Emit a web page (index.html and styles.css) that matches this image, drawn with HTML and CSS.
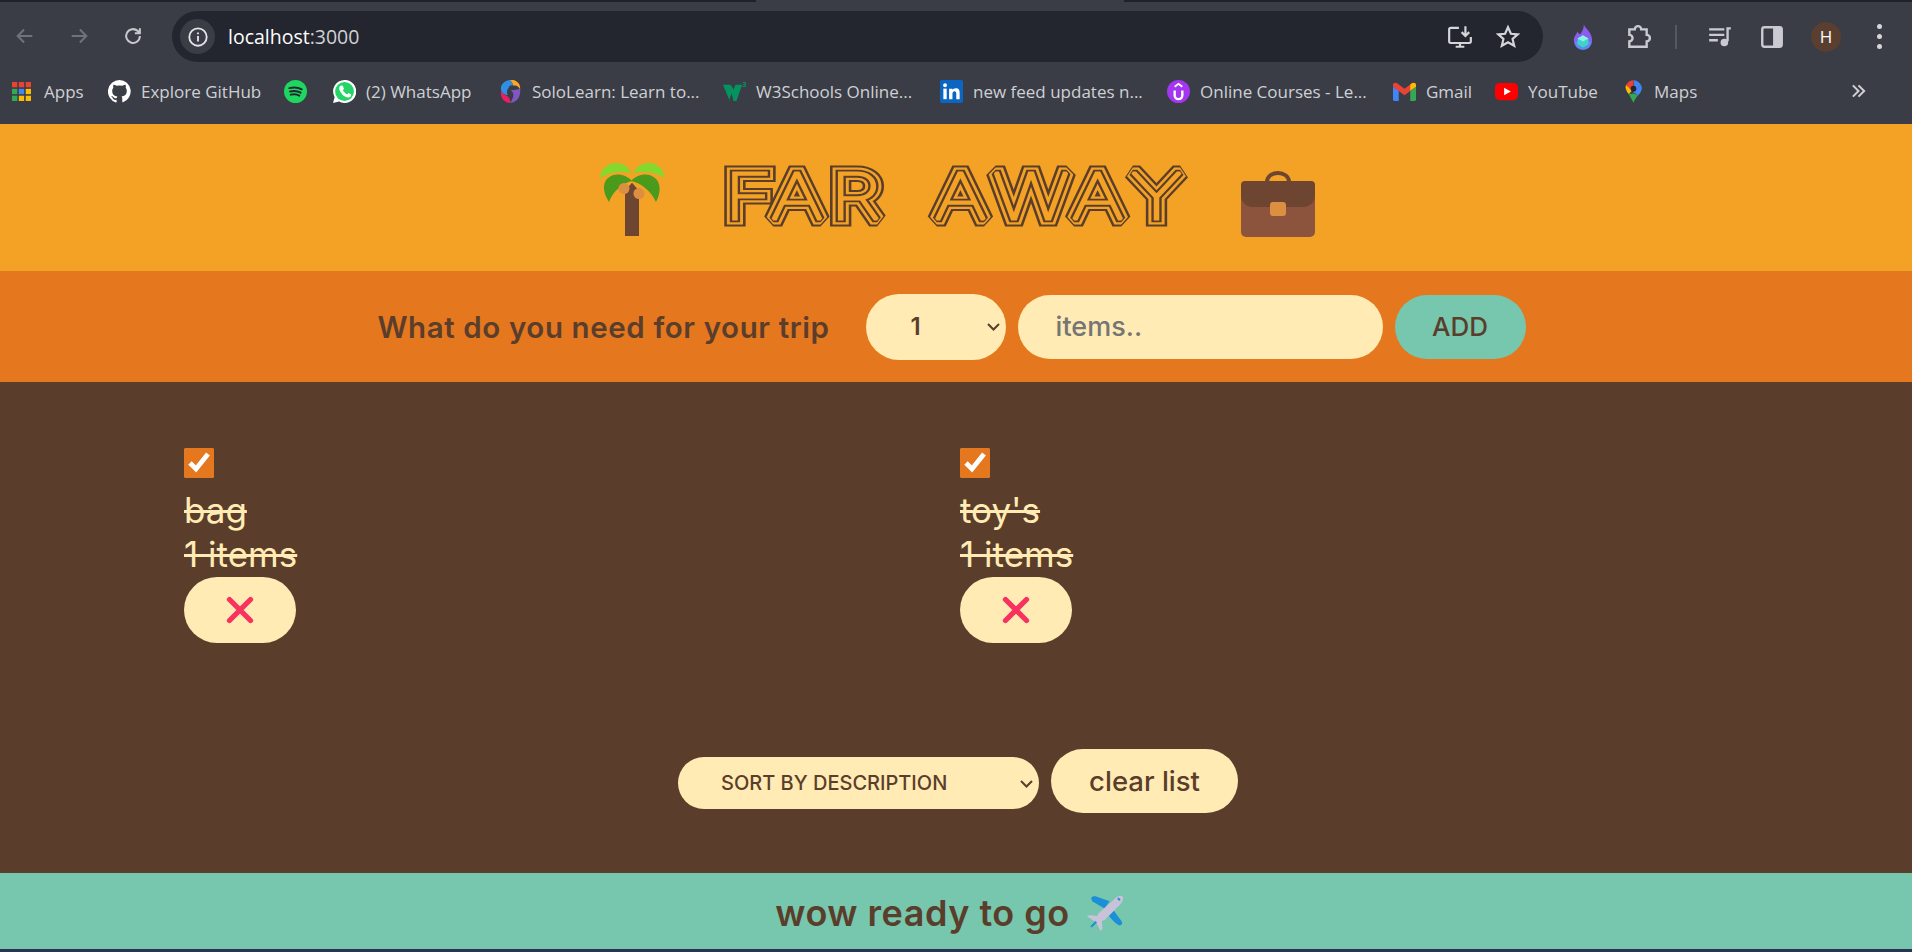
FILE: index.html
```html
<!DOCTYPE html>
<html lang="en">
<head>
<meta charset="utf-8">
<title>Far Away</title>
<link rel="stylesheet" href="styles.css">
</head>
<body>
<div class="chrome">
  <div class="tabstrip"><span class="tab-left"></span><span class="tab-right"></span></div>
  <div class="toolbar">
    <svg class="nav nav-dim" viewBox="0 0 24 24"><path d="M20 12H5M11 5l-7 7 7 7"/></svg>
    <svg class="nav nav-dim" viewBox="0 0 24 24"><path d="M4 12h15M13 5l7 7-7 7"/></svg>
    <svg class="nav" viewBox="0 0 24 24"><path d="M19.500 12a7.500 7.500 0 1 1-2.300-5.400L19.500 9M19.500 3.500V9H14"/></svg>
    <div class="omnibox">
      <span class="site-info"><svg viewBox="0 0 24 24"><circle cx="12" cy="12" r="9.500"/><path d="M12 11v6M12 7v2"/></svg></span>
      <span class="url">localhost<span class="url-port">:3000</span></span>
      <svg class="omni-icon" viewBox="0 0 24 24"><path d="M11 3.500H3.500A1.500 1.500 0 0 0 2 5v11a1.500 1.500 0 0 0 1.500 1.500h17A1.500 1.500 0 0 0 22 16v-4M8 21h8M12 18v3M17 2v9M13.500 7.500L17 11l3.500-3.500"/></svg>
      <svg class="omni-icon" viewBox="0 0 24 24"><path d="M12 3l2.700 6 6.300.6-4.800 4.200 1.500 6.300L12 16.800 6.300 20.100l1.500-6.300L3 9.600 9.300 9z"/></svg>
    </div>
    <div class="tools">
      <svg class="flame" viewBox="0 0 24 30"><path fill="#8a5cf0" d="M13 1c1 5 9 8 9 18a10 10 0 0 1-20 0c0-5 3-7 4-10 1 2 2 3 3 3 2-3 4-6 4-11z"/><path fill="#5a8df0" d="M3 20a9 9 0 0 0 18 0z"/><path fill="#3fd3c9" d="M12 13l6 3.500v6.500l-6 3.500-6-3.500v-6.500z"/><path fill="#8df0e6" d="M12 13l6 3.500-6 3.500-6-3.500z"/></svg>
      <svg class="tool puzzle" viewBox="0 0 24 24"><path d="M9 5a3 3 0 0 1 6 0h5v5a3 3 0 0 1 0 6v5H4v-5a3 3 0 0 0 0-6V5z"/></svg>
      <span class="sep"></span>
      <svg class="tool queue" viewBox="0 0 24 24"><path d="M2 5h14M2 10h14M2 15h8M19 16V4h3"/><circle class="solid" cx="16" cy="17" r="3.500"/></svg>
      <svg class="tool panel" viewBox="0 0 24 24"><rect x="3" y="3" width="18" height="18" rx="2"/><rect class="solid" x="13" y="3" width="8" height="18"/></svg>
      <span class="avatar">H</span>
      <span class="dots"><i></i><i></i><i></i></span>
    </div>
  </div>
  <div class="bookmarks">
    <a class="bm"><svg class="bm-icon apps" viewBox="0 0 18 18"><rect width="5" height="5" fill="#ea4335"/><rect x="6.500" width="5" height="5" fill="#ea4335"/><rect x="13" width="5" height="5" fill="#ea4335"/><rect y="6.500" width="5" height="5" fill="#34a853"/><rect x="6.500" y="6.500" width="5" height="5" fill="#4285f4"/><rect x="13" y="6.500" width="5" height="5" fill="#fbbc04"/><rect y="13" width="5" height="5" fill="#34a853"/><rect x="6.500" y="13" width="5" height="5" fill="#fbbc04"/><rect x="13" y="13" width="5" height="5" fill="#fbbc04"/></svg>Apps</a>
    <a class="bm"><svg class="bm-icon" viewBox="0 0 24 24"><path fill="#fff" d="M12 0a12 12 0 0 0-3.800 23.400c.6.100.8-.300.8-.600v-2.100c-3.300.7-4-1.600-4-1.600-.5-1.400-1.300-1.800-1.300-1.800-1.100-.7.100-.7.100-.7 1.200.1 1.800 1.200 1.800 1.200 1.100 1.800 2.800 1.300 3.500 1 .1-.8.400-1.300.8-1.600-2.700-.3-5.500-1.300-5.500-5.900 0-1.300.5-2.400 1.200-3.200-.1-.3-.5-1.500.1-3.200 0 0 1-.3 3.300 1.200a11.500 11.500 0 0 1 6 0c2.300-1.500 3.300-1.200 3.300-1.200.7 1.700.2 2.900.1 3.200.8.800 1.200 1.900 1.200 3.200 0 4.600-2.800 5.600-5.500 5.900.4.400.8 1.100.8 2.200v3.300c0 .3.200.7.800.6A12 12 0 0 0 12 0z"/></svg>Explore GitHub</a>
    <a class="bm"><svg class="bm-icon" viewBox="0 0 24 24"><circle cx="12" cy="12" r="12" fill="#1ed760"/><path d="M5.500 8.500c4-1 9-1 13 1.200M6.300 12c3.500-.8 8-.6 11 1.200M7 15.300c3-.7 6.500-.5 9 1" fill="none" stroke="#23262e" stroke-width="2" stroke-linecap="round"/></svg></a>
    <a class="bm"><svg class="bm-icon" viewBox="0 0 24 24"><path fill="#fff" d="M12 0a12 12 0 0 0-10.300 18L0 24l6.300-1.600A12 12 0 1 0 12 0z"/><circle cx="12" cy="12" r="9.800" fill="#25d366"/><path fill="#fff" d="M8.500 5.800c-.8 0-2 1-2 3 0 3 4.500 9.400 9.500 9.400 2 0 3-1.300 3-2.500l-.2-.8-2.800-1.400-1.200 1.500c-1.500-.4-4-2.800-4.600-4.500l1.300-1.200-1.200-3.200z"/></svg>(2) WhatsApp</a>
    <a class="bm"><svg class="bm-icon" viewBox="0 0 24 24"><path fill="#f9a825" d="M11 0c6-1 12 3 11 10-1-3-4-5-7-4-1-3-2-5-4-6z"/><path fill="#2f8fe0" d="M11 0C5 1 2 5 2 9c0 4 3 6 7 7-1-3-1-5 1-8 1-2 3-3 5-2-1-3-2-5-4-6z"/><path fill="#e91e63" d="M2 11c-1 7 3 13 10 13 0-3-1-5-3-7-3-1-6-3-7-6z"/><path fill="#7e57c2" d="M22 9c1 8-3 14-10 15 1-3 3-5 3-8 0-3-1-4-3-5 4-1 8-1 10-2z"/></svg>SoloLearn: Learn to...</a>
    <a class="bm"><svg class="bm-icon" viewBox="0 0 24 24"><path fill="#04925f" d="M0 5h8l3 5 2-5h7l-6 17h-3l-2-8-3 8H7z"/><text class="w3-sup" x="20" y="7">3</text></svg>W3Schools Online...</a>
    <a class="bm"><svg class="bm-icon" viewBox="0 0 24 24"><rect width="24" height="24" rx="2" fill="#0a66c2"/><rect x="3.500" y="9" width="3.500" height="11" fill="#fff"/><circle cx="5.250" cy="5.500" r="2" fill="#fff"/><path fill="#fff" d="M9.500 9H13v1.500c.6-1 1.800-1.800 3.500-1.800 3.200 0 4 2 4 5V20H17v-5.500c0-1.500-.4-2.700-1.800-2.700S13 12.900 13 14.400V20H9.500z"/></svg>new feed updates n...</a>
    <a class="bm"><svg class="bm-icon" viewBox="0 0 24 24"><circle cx="12" cy="12" r="12" fill="#a435f0"/><path d="M8 11v5a4 4 0 0 0 8 0v-5" fill="none" stroke="#fff" stroke-width="2.500"/><path d="M8 7l4-3 4 3" fill="none" stroke="#fff" stroke-width="2"/></svg>Online Courses - Le...</a>
    <a class="bm"><svg class="bm-icon" viewBox="0 0 24 20"><path fill="#4285f4" d="M0 5v13a2 2 0 0 0 2 2h4V9z"/><path fill="#34a853" d="M18 9v11h4a2 2 0 0 0 2-2V5z"/><path fill="#ea4335" d="M0 5l12 9 12-9V3c0-2-3-3-5-1l-7 5-7-5C3 0 0 1 0 3z"/><path fill="#fbbc04" d="M18 3v6l6-4V3c0-2-3-3-4.500-1.500z"/></svg>Gmail</a>
    <a class="bm"><svg class="bm-icon" viewBox="0 0 24 18"><rect width="24" height="18" rx="5" fill="#f00"/><path fill="#fff" d="M9.500 5l7 4-7 4z"/></svg>YouTube</a>
    <a class="bm"><svg class="bm-icon maps" viewBox="0 0 18 24"><path fill="#34a853" d="M4 15l5 9c1-3 3-6 5-8l-5-2z"/><path fill="#fbbc04" d="M1 5C0 8 1 11 4 15l6-7z"/><path fill="#4285f4" d="M9 0c3 0 6 2 8 5l-8 9 1-6z"/><path fill="#ea4335" d="M9 0C6 0 3 2 1 5l5 5 3-4z"/><path fill="#4285f4" d="M17 5c2 4 0 8-3 11l-5-3z"/><circle cx="9" cy="9" r="3" fill="#23262e"/></svg>Maps</a>
    <svg class="more" viewBox="0 0 16 14"><path d="M2 1l6 6-6 6M8 1l6 6-6 6"/></svg>
  </div>
</div>

<main class="app">
  <header class="hero">
    <svg class="emoji palm" viewBox="0 0 66 74"><path fill="#6d4530" d="M26 73V28l7-8 7 8v45z"/><path fill="#84d82e" d="M1 15.500C1 6 9 0 17 0c7 0 13 4 15.500 10.500C22 7 10 9 1 15.500z"/><path fill="#84d82e" d="M34 10.500C37 4 43 0 50 0c8 0 15 6 15.500 15C56 9 44 7 34 10.500z"/><path fill="#4a9a1c" d="M10 39C4 30 3 20 9 15c7-6 18-4 24 3-9 2-19 10-23 21z"/><path fill="#4a9a1c" d="M57 39c5-9 5-19-1-24-7-6-18-4-24 3 10 2 20 10 25 21z"/><path fill="#6d4530" d="M26 28l7-8 7 8v10H26z"/><circle fill="#dc8f41" cx="25" cy="25.500" r="5.500"/><circle fill="#dc8f41" cx="40" cy="30.500" r="5.500"/></svg>
    <h1 class="logo">
      <svg class="logo-svg" viewBox="0 0 462 61">
        <g class="logo-layers">
          <g class="layer-1"><text id="logo-text" class="logo-text" x="0.500 36 82 125 161.700 206.900 267.400 312.500" y="53.500">FAR AWAY</text></g>
          <use class="layer-2" href="#logo-text"/>
          <use class="layer-3" href="#logo-text"/>
          <use class="layer-4" href="#logo-text"/>
        </g>
      </svg>
    </h1>
    <svg class="emoji bag" viewBox="0 0 74 67"><path fill="none" stroke="#6d4530" stroke-width="4" d="M26 14v-2c0-12 22-12 22 0v2"/><path fill="#8c533d" d="M0 15h74v47a5 5 0 0 1-5 5H5a5 5 0 0 1-5-5z"/><path fill="#6d4530" d="M4 11h66a4 4 0 0 1 4 4v10c0 8-6 12-12 12H12C6 37 0 33 0 25V15a4 4 0 0 1 4-4z"/><rect fill="#dc8f41" x="29" y="32" width="16" height="14" rx="3"/></svg>
  </header>

  <form class="add-form">
    <h3 class="add-title">What do you need for your trip</h3>
    <select class="qty"><option>1</option></select>
    <input class="item-input" type="text" placeholder="items..">
    <button class="add-btn" type="button">ADD</button>
  </form>

  <section class="list">
    <ul class="items">
      <li class="item">
        <input class="check" type="checkbox" checked>
        <span class="packed">bag</span>
        <span class="packed">1 items</span>
        <button class="remove" type="button"><svg viewBox="0 0 24 24"><path d="M3 3l18 18M21 3L3 21"/></svg></button>
      </li>
      <li class="item">
        <input class="check" type="checkbox" checked>
        <span class="packed">toy's</span>
        <span class="packed">1 items</span>
        <button class="remove" type="button"><svg viewBox="0 0 24 24"><path d="M3 3l18 18M21 3L3 21"/></svg></button>
      </li>
    </ul>
    <div class="actions">
      <select class="sort"><option>SORT BY DESCRIPTION</option></select>
      <button class="clear" type="button">clear list</button>
    </div>
  </section>

  <footer class="stats">
    <span>wow ready to go</span>
    <svg class="plane" viewBox="0 0 36 36"><path fill="#1c8fd8" d="M4 4c1-2 3-2 5-1.500L22 7l-5 7L5 7zM26 16l8 11c1 2-1 4-3 3.500-3-1.500-6-4.500-10-9.500z"/><path fill="#c9c2da" d="M27 4.500C30 2 33 1 34.500 2.500 36 4 35 7 32.500 10L17 25.500l-2.500.5.5 8-2 2-3.500-7.500-2-2L0 22l2-1.500 8 1 1-2.500z"/><path d="M4 32l5-5M30 4l2 2" stroke="#1c8fd8" stroke-width="2" fill="none"/></svg>
  </footer>
</main>
<div class="taskbar-edge"></div>
</body>
</html>
```

FILE: styles.css
```css
* { box-sizing: border-box; }
html, body { margin: 0; padding: 0; height: 952px; overflow: hidden; }
body { font-family: "Inter", "Lato", sans-serif; background: #3a3d46; color: #5a3e2b; }

.chrome { height: 124px; background: #3a3d46; display: flex; flex-direction: column; }
.tabstrip { height: 2px; background: #3a3d46; display: flex; justify-content: space-between; }
.tab-left { width: 756px; background: #20222a; }
.tab-right { width: 788px; background: #20222a; }
.toolbar { height: 60px; padding: 9px 0 0 14px; display: flex; align-items: flex-start; }
.nav { width: 22px; height: 22px; margin: 14px 32px 0 0; fill: none; stroke: #c7c8cc; stroke-width: 2.200; }
.nav-dim { stroke: #6f727a; }
.omnibox { margin-left: -4px; width: 1371px; height: 51px; background: #23262e; border-radius: 26px; display: flex; align-items: center; padding: 0 22px 0 8px; color: #fff; }
.site-info { width: 35px; height: 35px; border-radius: 50%; background: #3a3d46; display: flex; align-items: center; justify-content: center; }
.site-info svg { width: 22px; height: 22px; fill: none; stroke: #e4e5e7; stroke-width: 2; }
.url { margin-left: 13px; font: 19.500px "Open Sans", sans-serif; flex: 1; }
.url-port { color: #d0d1d4; }
.omni-icon { width: 26px; height: 26px; margin-left: 22px; fill: none; stroke: #d5d6d9; stroke-width: 2; }
.tools { display: flex; align-items: center; height: 51px; }
.flame { width: 22px; height: 28px; margin-left: 29px; }
.tool { width: 26px; height: 26px; fill: none; stroke: #c9cbd1; stroke-width: 2.200; }
.puzzle { margin-left: 31px; }
.sep { width: 2px; height: 24px; background: #555862; margin: 0 30px 0 24px; }
.queue { margin-right: 26px; }
.panel { margin-right: 26px; }
.tool .solid { fill: #c9cbd1; stroke: none; }
.avatar { width: 30px; height: 30px; border-radius: 50%; background: #5a3e2f; color: #fff; font: 17px "Open Sans", sans-serif; display: flex; align-items: center; justify-content: center; }
.dots { display: flex; flex-direction: column; gap: 5px; margin-left: 36px; }
.dots i { width: 5px; height: 5px; border-radius: 50%; background: #d5d6d9; }

.bookmarks { flex: 1; display: grid; grid-template-columns: 96px 176px 49px 166px 224px 217px 227px 226px 102px 130px 226px 15px; align-items: center; padding: 0 0 4px 12px; font: 17px "Open Sans", sans-serif; color: #cfd0d4; }
.bm { display: flex; align-items: center; gap: 10px; white-space: nowrap; }
.bm-icon { width: 23px; height: 23px; flex: none; }
.apps { width: 19px; height: 19px; margin-right: 3px; }
.maps { width: 17px; margin-right: 2px; }
.w3-sup { font: 700 8px "Open Sans", sans-serif; fill: #04925f; }
.more { width: 15px; height: 14px; fill: none; stroke: #cfd0d4; stroke-width: 2.200; }

.app { height: 825px; display: flex; flex-direction: column; }
.hero { height: 147px; background: #f4a226; display: flex; align-items: flex-end; justify-content: center; padding: 0 0 34px 2px; }
.emoji { flex: none; }
.palm { width: 66px; height: 74px; }
.bag { width: 74px; height: 67px; }
.logo { margin: 0 55px 11px 59px; line-height: 0; }
.logo-svg { width: 462px; height: 61px; overflow: visible; }
.logo-layers { transform: scaleX(1.300); }
.logo-text { font: 100 63px "Inter", "Lato", sans-serif; stroke-linejoin: miter; stroke-miterlimit: 1.500; }
.layer-1 { fill: #5a3e2b; stroke: #5a3e2b; stroke-width: 15px; }
.layer-2 { fill: #f4a226; stroke: #f4a226; stroke-width: 11px; }
.layer-3 { fill: #5a3e2b; stroke: #5a3e2b; stroke-width: 6.500px; }
.layer-4 { fill: #f4a226; stroke: #f4a226; stroke-width: 2.800px; }

.add-form { height: 111px; background: #e5771f; display: flex; align-items: center; justify-content: center; padding-right: 9px; }
.add-title { margin: 0 36px 0 0; font-size: 29.500px; font-weight: 600; letter-spacing: 0.600px; color: #5a3e2b; }
.qty, .item-input, .add-btn, .sort, .clear, .remove { font-family: inherit; font-weight: 600; color: #5a3e2b; border: none; background-color: #ffebb3; }
.qty, .sort { appearance: none; background-repeat: no-repeat; background-size: 13px 8px; background-image: url("data:image/svg+xml,%3Csvg xmlns='http://www.w3.org/2000/svg' viewBox='0 0 13 8'%3E%3Cpath d='M1 1l5.500 5.500L12 1' fill='none' stroke='%235a3e2b' stroke-width='2'/%3E%3C/svg%3E"); }
.qty { width: 140px; height: 66px; border-radius: 33px; padding-left: 45px; font-size: 24px; background-position: 121px 29px; }
.item-input { width: 365px; height: 64px; margin-left: 12px; border-radius: 32px; padding: 0 38px; font-size: 27px; font-weight: 500; outline: none; }
.item-input::placeholder { color: #757575; opacity: 1; }
.add-btn { width: 131px; height: 64px; margin-left: 12px; border-radius: 32px; background-color: #76c7ad; font-size: 26px; font-weight: 500; }

.list { flex: 1; background: #5a3e2b; display: flex; flex-direction: column; padding: 66px 0 60px 184px; }
.items { list-style: none; margin: 0; padding: 0; display: grid; grid-template-columns: 776px 776px; flex: 1; }
.item { display: flex; flex-direction: column; align-items: flex-start; }
.check { width: 30px; height: 30px; margin: 0 0 10px; accent-color: #e5771f; }
.packed { font-size: 35px; line-height: 44px; font-weight: 400; color: #ffebb3; text-decoration: line-through; }
.remove { width: 112px; height: 66px; border-radius: 33px; padding: 0; margin-top: 1px; display: flex; align-items: center; justify-content: center; }
.remove svg { width: 28px; height: 28px; fill: none; stroke: #f9315f; stroke-width: 4.500; stroke-linecap: round; }
.actions { display: flex; align-items: flex-start; justify-content: center; gap: 12px; margin-left: -180px; }
.sort { width: 361px; height: 52px; border-radius: 26px; padding-left: 43px; font-size: 20px; font-weight: 500; margin-top: 8px; background-position: 342px 23px; }
.clear { width: 187px; height: 64px; border-radius: 32px; font-size: 27.500px; font-weight: 500; }

.stats { height: 76px; background: #76c7ad; display: flex; align-items: center; justify-content: center; gap: 17px; font-size: 36px; letter-spacing: 0.500px; font-weight: 600; padding: 3px 13px 0 0; }
.plane { width: 37px; height: 37px; }
.taskbar-edge { height: 3px; background: #2b3350; }
```
